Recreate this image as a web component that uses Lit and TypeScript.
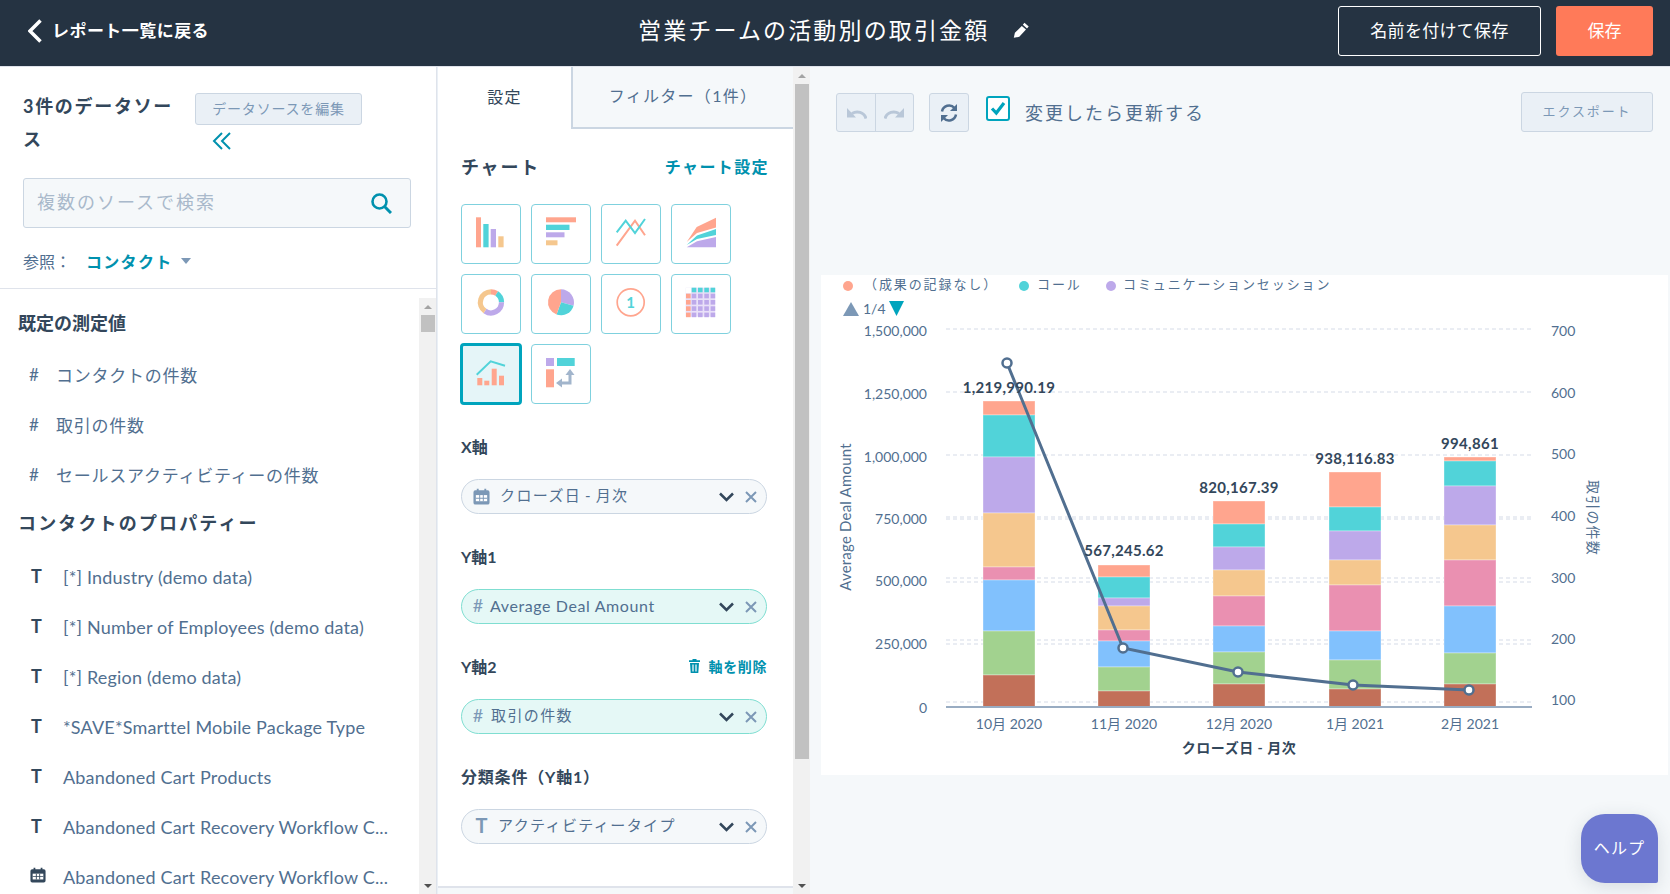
import { LitElement, html, svg, css } from 'lit';
import { customElement } from 'lit/decorators.js';

const COLORS = ['#ffa58e', '#51d3d9', '#bda9ea', '#f5c78e', '#ea90b1', '#81c1fd', '#a2d28f', '#c27059'];

/* segment boundaries of each stacked bar, top to bottom, in page pixels */
const BARS = [
  { x: 983, label: '1,219,990.19', labelY: 387, month: '10月 2020', ys: [401, 415, 457, 513, 567, 580, 631, 675, 707] },
  { x: 1098, label: '567,245.62', labelY: 549.5, month: '11月 2020', ys: [565, 577, 598, 606, 630, 641, 667, 691, 707] },
  { x: 1213, label: '820,167.39', labelY: 486.5, month: '12月 2020', ys: [501, 524, 547, 570, 596, 626, 652, 684, 707] },
  { x: 1329, label: '938,116.83', labelY: 457.5, month: '1月 2021', ys: [472, 507, 531, 560, 585, 631, 660, 689, 707] },
  { x: 1444, label: '994,861', labelY: 442.5, month: '2月 2021', ys: [457, 461, 486, 525, 560, 606, 653, 684, 707] },
];

const LINE = [[1007, 363], [1123, 648], [1238, 672], [1353, 685], [1469, 690]];
const LEFT_TICKS: [string, number][] = [['1,500,000', 330], ['1,250,000', 393], ['1,000,000', 456], ['750,000', 518], ['500,000', 580], ['250,000', 643], ['0', 707]];
const RIGHT_TICKS: [string, number][] = [['700', 330], ['600', 392], ['500', 453], ['400', 515], ['300', 577], ['200', 638], ['100', 699]];
const GRID = [329, 392, 455, 517, 519, 578, 582, 640, 644, 702];

function arc(cx: number, cy: number, r: number, a0: number, a1: number) {
  const p = (a: number) => [cx + r * Math.sin((a * Math.PI) / 180), cy - r * Math.cos((a * Math.PI) / 180)];
  const [x0, y0] = p(a0);
  const [x1, y1] = p(a1);
  return `M${cx} ${cy}L${x0} ${y0}A${r} ${r} 0 ${a1 - a0 > 180 ? 1 : 0} 1 ${x1} ${y1}Z`;
}

const tileIcons = [
  svg`<rect x="15" y="13.3" width="5" height="30" fill="#ffa58e"/><rect x="22.3" y="20" width="5.3" height="23.3" fill="#51d3d9"/><rect x="29.7" y="25" width="5.3" height="18.3" fill="#bda9ea"/><rect x="37.3" y="32.3" width="5.3" height="11" fill="#f5c78e"/>`,
  svg`<rect x="15" y="13.3" width="30" height="5" fill="#ffa58e"/><rect x="15" y="20.7" width="23.5" height="5.3" fill="#51d3d9"/><rect x="15" y="28.3" width="18.5" height="5" fill="#bda9ea"/><rect x="15" y="36.3" width="11.5" height="5" fill="#f5c78e"/>`,
  svg`<polyline points="15.7,41.7 34,16.7 44,31.3" fill="none" stroke="#ffa58e" stroke-width="2"/><polyline points="15.7,28.3 24.7,16.7 34,29 44,15" fill="none" stroke="#51d3d9" stroke-width="2"/>`,
  svg`<polygon points="15.7,38 25.7,23 45,13.7 45,23.5 26,29" fill="#ffa58e"/><polygon points="15.7,41 26,31.5 45,25 45,31 26,35" fill="#51d3d9"/><polygon points="15.7,43.3 26,37.3 45,33 45,43.3" fill="#bda9ea"/>`,
  svg`<g fill="none" stroke-width="5.2"><path d="M30 17.8A10.5 10.5 0 0 1 35.7 19.5" stroke="#ffa58e"/><path d="M35.7 19.5A10.5 10.5 0 0 1 40.5 28.3" stroke="#51d3d9"/><path d="M40.5 28.3A10.5 10.5 0 0 1 24 37" stroke="#bda9ea"/><path d="M24 37A10.5 10.5 0 0 1 30 17.8" stroke="#f5c78e"/></g>`,
  svg`<path d="${arc(30, 28.3, 13, 0, 105)}" fill="#bda9ea"/><path d="${arc(30, 28.3, 13, 105, 200)}" fill="#51d3d9"/><path d="${arc(30, 28.3, 13, 200, 360)}" fill="#ffa58e"/>`,
  svg`<circle cx="29.7" cy="28.3" r="13.5" fill="none" stroke="#ffa58e" stroke-width="1.7"/><text x="29.7" y="33.5" text-anchor="middle" font-size="15" font-weight="700" fill="#51d3d9" font-family="Lato, sans-serif">1</text>`,
  svg`<rect x="14.7" y="13.7" width="29.5" height="29" fill="#e9e1f8"/><rect x="14.7" y="13.7" width="5.5" height="5.5" fill="#fff"/>
    ${[0, 1, 2, 3].map((i) => svg`<rect x="${20.7 + i * 6.3}" y="13.7" width="4.6" height="4.6" fill="#51d3d9"/><rect x="15" y="${19.7 + i * 6.3}" width="4.6" height="4.6" fill="#ffa58e"/>
    ${[0, 1, 2, 3].map((j) => svg`<rect x="${20.7 + i * 6.3}" y="${19.7 + j * 6.3}" width="4.6" height="4.6" fill="#bda9ea"/>`)}`)}`,
  svg`<polyline points="15.7,30.7 29.7,17.3 44,21.7" fill="none" stroke="#51d3d9" stroke-width="2"/><rect x="16.3" y="34" width="5" height="7.3" fill="#ffa58e"/><rect x="23.3" y="36.7" width="5" height="4.6" fill="#ffa58e"/><rect x="30.7" y="24.7" width="5" height="16.6" fill="#ffa58e"/><rect x="38" y="31.7" width="5" height="9.6" fill="#ffa58e"/>`,
  svg`<rect x="15" y="14" width="8" height="8" fill="#bda9ea"/><rect x="26" y="14" width="17.7" height="8" fill="#51d3d9"/><rect x="15" y="25.3" width="8" height="18" fill="#ffa58e"/><path d="M39 30V39H30" fill="none" stroke="#a2b5cc" stroke-width="3"/><polygon points="39,25 43.5,31 34.5,31" fill="#a2b5cc"/><polygon points="25,39 31,34.5 31,43.5" fill="#a2b5cc"/>`,
];

const calendarIcon = (w: number, color: string) => html`<svg width=${w} height=${w} viewBox="0 0 18 18"><path fill=${color} d="M2.500 2.500H4V.8h2v1.700h6V.8h2v1.700h1.500a2 2 0 0 1 2 2v11a2 2 0 0 1-2 2h-13a2 2 0 0 1-2-2v-11a2 2 0 0 1 2-2z"/><path fill="#fff" d="M3 7.500h12v6.500H3z"/><path fill=${color} d="M6.600 7.500h1v6.500h-1zM10.400 7.500h1v6.500h-1zM3 10.300h12v1H3z"/></svg>`;

@customElement('deal-chart')
class DealChart extends LitElement {
  static styles = css`
    :host { display: block; height: 100%; }
    svg { display: block; width: 100%; height: 100%; }
    text { font-family: Lato, "Noto Sans CJK JP", sans-serif; dominant-baseline: central; }
    .tick { font-size: 14px; fill: #516f90; }
    .legend { font-size: 13px; fill: #516f90; letter-spacing: 1.9px; }
    .value { font-size: 15px; font-weight: 700; fill: #33475b; letter-spacing: .3px; }
    .axis { font-size: 14px; font-weight: 700; fill: #33475b; letter-spacing: .5px; }
    .side { font-size: 15px; fill: #516f90; letter-spacing: .2px; }
    .side.ja { font-size: 14px; letter-spacing: 1.2px; }
  `;

  render() {
    const pts = LINE.map((p) => p.join(',')).join(' ');
    return html`<svg viewBox="821 275 847 500">
      <rect x="821" y="275" width="847" height="500" fill="#fff"/>
      <circle cx="848" cy="286" r="5" fill="#ffa58e"/>
      <text class="legend" x="864" y="284">（成果の記録なし）</text>
      <circle cx="1024" cy="286" r="5" fill="#51d3d9"/>
      <text class="legend" x="1037" y="284">コール</text>
      <circle cx="1111" cy="286" r="5" fill="#bda9ea"/>
      <text class="legend" x="1123" y="284">コミュニケーションセッション</text>
      <polygon points="851,302 859,316 843,316" fill="#7c98b6"/>
      <text x="863" y="308" font-size="14" fill="#516f90">1/4</text>
      <polygon points="889,301 904,301 896.500,316" fill="#00a4bd"/>

      ${GRID.map((y) => svg`<line x1="946" x2="1532" y1=${y} y2=${y} stroke="#e3e8f0" stroke-width="1.500" stroke-dasharray="4 3"/>`)}
      ${LEFT_TICKS.map(([t, y]) => svg`<text class="tick" x="927" y=${y} text-anchor="end">${t}</text>`)}
      ${RIGHT_TICKS.map(([t, y]) => svg`<text class="tick" x="1551" y=${y}>${t}</text>`)}

      ${BARS.map((b) => svg`
        ${COLORS.map((c, i) => svg`<rect x=${b.x} y=${b.ys[i]} width="52" height=${b.ys[i + 1] - b.ys[i]} fill=${c} stroke="#fff" stroke-opacity=".35"/>`)}
        <text class="tick" x=${b.x + 26} y="723" text-anchor="middle">${b.month}</text>
      `)}
      <line x1="946" x2="1532" y1="707" y2="707" stroke="#99acc2" stroke-width="2"/>

      <polyline points=${pts} fill="none" stroke="#516f90" stroke-width="3"/>
      ${BARS.map((b) => svg`<text class="value" x=${b.x + 26} y=${b.labelY} text-anchor="middle">${b.label}</text>`)}
      ${LINE.map(([x, y]) => svg`<circle cx=${x} cy=${y} r="4.500" fill="#fff" stroke="#516f90" stroke-width="2.500"/>`)}

      <text class="axis" x="1239" y="747" text-anchor="middle">クローズ日 - 月次</text>
      <text class="side" transform="translate(845 517) rotate(-90)" text-anchor="middle">Average Deal Amount</text>
      <text class="side ja" transform="translate(1593 518) rotate(90)" text-anchor="middle">取引の件数</text>
    </svg>`;
  }
}

@customElement('app-root')
class AppRoot extends LitElement {
  static styles = css`
    :host { display: block; height: 894px; overflow: hidden; position: relative; font-family: Lato, "Noto Sans CJK JP", sans-serif; color: #33475b; background: #f5f8fa; }
    * { box-sizing: border-box; }
    svg { display: block; flex: none; }

    .top { height: 67px; background: #253342; border-bottom: 1px solid #dfe3eb; display: flex; align-items: center; padding: 0 17px 5px 28px; color: #fff; }
    .back { display: flex; align-items: center; gap: 10px; font-size: 17px; font-weight: 700; letter-spacing: .45px; width: 179px; white-space: nowrap; }
    .back span { padding-bottom: 2px; }
    .title { margin-left: 431px; font-size: 23px; letter-spacing: 2.150px; white-space: nowrap; display: flex; align-items: center; gap: 24px; }
    .title span { padding-bottom: 3px; }
    .title svg { margin-bottom: 2px; }
    .spacer { flex: 1; }
    .save-as { width: 203px; height: 50px; border: 1px solid #fff; border-radius: 3px; display: flex; align-items: center; justify-content: center; font-size: 17px; letter-spacing: .3px; padding-bottom: 3px; }
    .save { width: 97px; height: 50px; margin-left: 15px; background: #ff7a59; border-radius: 3px; display: flex; align-items: center; justify-content: center; font-size: 17px; padding-bottom: 3px; }

    .main { display: grid; grid-template-columns: 437px 373px 1fr; height: 827px; }

    .left { border-right: 1px solid #dfe3eb; background: #fff; display: flex; flex-direction: column; min-height: 0; }
    .left-top { height: 222px; flex: none; padding: 26px 24px 0 23px; border-bottom: 1px solid #dfe3eb; }
    .source-row { display: flex; height: 65px; }
    .source-title { width: 160px; margin: -3px 12px 0 0; font-size: 18px; font-weight: 700; line-height: 33px; letter-spacing: 1.700px; }
    .edit-btn { width: 167px; height: 32px; padding-bottom: 3px; background: #eaf0f6; border: 1px solid #cbd6e2; border-radius: 3px; color: #7c98b6; font-size: 14px; letter-spacing: .8px; display: flex; align-items: center; justify-content: center; }
    .collapse { margin: 7px 0 0 17px; }
    .search { margin-top: 20px; width: 388px; height: 50px; background: #f5f8fa; border: 1px solid #cbd6e2; border-radius: 3px; display: flex; align-items: center; justify-content: space-between; padding: 0 18px 0 13px; color: #a9b9cb; font-size: 18px; letter-spacing: 2px; }
    .search span { padding-bottom: 5px; }
    .ref { margin-top: 21px; display: flex; align-items: center; font-size: 16px; color: #516f90; }
    .ref b { margin-left: 15px; color: #0091ae; letter-spacing: 1.300px; }
    .ref i { margin-left: 8px; width: 0; height: 0; border: 5.500px solid transparent; border-top: 6px solid #7c98b6; border-bottom: 0; }

    .list-wrap { flex: 1; display: flex; min-height: 0; }
    .list { flex: 1; overflow: hidden; min-width: 0; padding: 21px 0 0 18px; }
    .list h3 { margin: 0; height: 26px; line-height: 26px; font-size: 18px; font-weight: 700; }
    .list h3.first { margin-bottom: 14px; }
    .list h3.second { margin: 10px 0 17px; letter-spacing: 2.150px; }
    .row { height: 50px; display: flex; align-items: center; color: #516f90; font-size: 18px; letter-spacing: .18px; white-space: nowrap; padding-bottom: 2px; }
    .row .mark { flex: none; width: 45px; padding-left: 11px; font-size: 17px; color: #516f90; }
    .row .mark.t { padding: 0 0 2px 13px; width: 45px; font-weight: 700; font-size: 18px; color: #33475b; }
    .row .mark.cal { padding: 0 0 5px 12px; }
    .row.num { font-size: 17px; letter-spacing: .75px; }
    .row.num .mark { width: 38px; }

    .scroll { width: 17px; flex: none; background: #f1f1f1; display: flex; flex-direction: column; align-items: center; }
    .left .scroll { margin-top: 9px; }
    .arrow { flex: none; height: 17px; display: flex; align-items: center; justify-content: center; }
    .arrow i { width: 0; height: 0; border: 4px solid transparent; border-bottom: 4px solid #a3a3a3; border-top: 0; }
    .arrow.down { margin-top: auto; }
    .arrow.down i { border-bottom: 0; border-top: 4px solid #505050; }
    .thumb { width: 14px; background: #c1c1c1; }

    .mid { display: flex; background: #fff; border-left: 1px solid #eaf0f6; min-height: 0; }
    .mid-main { flex: 1; min-width: 0; display: flex; flex-direction: column; }
    .tabs { height: 62px; display: flex; flex: none; }
    .tab { display: flex; align-items: center; justify-content: center; font-size: 16px; letter-spacing: 1.300px; padding-bottom: 5px; }
    .tab.on { width: 133px; }
    .tab.off { flex: 1; background: #f5f8fa; border-left: 2px solid #cbd6e2; border-bottom: 2px solid #cbd6e2; color: #516f90; }
    .cfg { flex: 1; padding: 25px 26px 0 23px; }
    .cfg-head { display: flex; justify-content: space-between; align-items: center; height: 26px; padding-bottom: 2px; }
    .cfg-head b { font-size: 18px; letter-spacing: 1.800px; }
    .cfg-head a { color: #0091ae; font-size: 16px; font-weight: 700; letter-spacing: 1.400px; margin-right: -2px; }
    .tiles { display: grid; grid-template-columns: repeat(4, 60px); grid-auto-rows: 60px; gap: 10px; margin: 24px 0 32px; }
    .tile { border: 1px solid #7fd1de; border-radius: 4px; background: #fff; }
    .tile.on { background: #e5f5f8; border: 3px solid #00a4bd; margin: -1px; }
    .tile svg { width: 100%; height: 100%; }

    .field-label { display: flex; justify-content: space-between; align-items: center; height: 24px; margin-bottom: 19px; padding-bottom: 5px; font-size: 16px; font-weight: 700; }
    .field-label.wide { letter-spacing: .8px; }
    .remove { display: flex; align-items: center; gap: 9px; color: #0091ae; font-size: 14px; letter-spacing: .6px; }
    .pill { height: 35px; margin-bottom: 32px; border: 1px solid #cbd6e2; border-radius: 18px; background: #f5f8fa; display: flex; align-items: center; padding: 0 9px 0 11px; font-size: 15px; color: #516f90; letter-spacing: 1.400px; white-space: nowrap; }
    .pill.live { background: #e5f8f6; border-color: #7fded1; }
    .pill .kind { flex: none; width: 17px; margin-right: 10px; color: #7c98b6; display: flex; justify-content: center; }
    .pill .hash { width: 10px; margin-right: 8px; font-size: 18px; font-weight: 400; letter-spacing: 0; padding-bottom: 3px; }
    .pill .bigt { font-size: 20px; font-weight: 700; letter-spacing: 0; width: 17px; margin-right: 8px; padding-bottom: 3px; }
    .pill .name { flex: 1; padding-bottom: 5px; word-spacing: -1.500px; }
    .pill .en { font-size: 16px; letter-spacing: .6px; padding-bottom: 2px; word-spacing: 0; margin-left: -1px; }
    .pill .chev { margin-right: 11px; }
    .mid-foot { flex: none; height: 8px; background: #f5f8fa; border-top: 2px solid #dfe3eb; }

    .right { background: #f5f8fa; display: flex; flex-direction: column; min-width: 0; }
    .tools { height: 208px; flex: none; padding: 26px 17px 0 26px; display: flex; align-items: flex-start; }
    .group { display: flex; height: 39px; border: 1px solid #cbd6e2; border-radius: 3px; background: #eaf0f6; }
    .group span { width: 38px; display: flex; align-items: center; justify-content: center; }
    .group span + span { border-left: 1px solid #cbd6e2; }
    .refresh { margin-left: 15px; }
    .check { width: 24px; height: 25px; margin: 3px 0 0 17px; border: 2px solid #00a4bd; border-radius: 3px; background: #fff; display: flex; align-items: center; justify-content: center; }
    .auto { margin: 6px 0 0 15px; font-size: 18px; color: #516f90; letter-spacing: 2px; white-space: nowrap; }
    .export { margin: -1px 0 0 auto; width: 132px; height: 40px; padding-bottom: 4px; border: 1px solid #cbd6e2; border-radius: 3px; background: #eaf0f6; color: #7c98b6; font-size: 13px; letter-spacing: 1.900px; display: flex; align-items: center; justify-content: center; }
    .chart { margin: 0 2px 0 11px; height: 500px; }

    .help { position: absolute; left: 1581px; top: 814px; width: 77px; height: 69px; padding-bottom: 4px; background: #6c77d0; color: #fff; border-radius: 24px 24px 2px 24px; box-shadow: 0 4px 18px rgba(45, 62, 80, .15); display: flex; align-items: center; justify-content: center; font-size: 16px; letter-spacing: 1.200px; }
  `;

  private renderRow(kind: 'num' | 't' | 'cal', name: string) {
    return html`<div class="row ${kind === 'num' ? 'num' : ''}">
      ${kind === 'num' ? html`<span class="mark">#</span>` : kind === 't' ? html`<span class="mark t">T</span>` : html`<span class="mark t cal">${calendarIcon(16, '#33475b')}</span>`}
      <span>${name}</span>
    </div>`;
  }

  private renderPill(kind: 'cal' | 'num' | 't', name: string, live: boolean, en = false) {
    return html`<div class="pill ${live ? 'live' : ''}">
      ${kind === 'cal' ? html`<span class="kind">${calendarIcon(17, '#7c98b6')}</span>` : kind === 'num' ? html`<span class="kind hash">#</span>` : html`<span class="kind bigt">T</span>`}
      <span class="name ${en ? 'en' : ''}">${name}</span>
      <svg class="chev" width="15" height="10" viewBox="0 0 15 10"><polyline points="1,1.500 7.500,8 14,1.500" fill="none" stroke="#33475b" stroke-width="2.500"/></svg>
      <svg width="12" height="12" viewBox="0 0 12 12"><path d="M1 1L11 11M11 1L1 11" stroke="#7c98b6" stroke-width="2"/></svg>
    </div>`;
  }

  render() {
    return html`
      <header class="top">
        <div class="back">
          <svg width="14" height="24" viewBox="0 0 14 24"><polyline points="12.500,1.500 2,12 12.500,22.500" fill="none" stroke="#fff" stroke-width="3.500"/></svg>
          <span>レポート一覧に戻る</span>
        </div>
        <div class="title">
          <span>営業チームの活動別の取引金額</span>
          <svg width="17" height="16" viewBox="0 0 17 16"><path fill="#fff" d="M11.500.8l4.200 3.700-1.700 2-4.200-3.700zM8.800 3.900l4.200 3.700-6.700 7.200-5.500 1 1.100-5z"/></svg>
        </div>
        <div class="spacer"></div>
        <div class="save-as">名前を付けて保存</div>
        <div class="save">保存</div>
      </header>

      <div class="main">
        <section class="left">
          <div class="left-top">
            <div class="source-row">
              <div class="source-title">3件のデータソース</div>
              <div>
                <div class="edit-btn">データソースを編集</div>
                <svg class="collapse" width="20" height="18" viewBox="0 0 20 18"><path d="M10 1L2 9l8 8M18 1l-8 8 8 8" fill="none" stroke="#0091ae" stroke-width="2"/></svg>
              </div>
            </div>
            <div class="search">
              <span>複数のソースで検索</span>
              <svg width="21" height="21" viewBox="0 0 21 21"><circle cx="8.500" cy="8.500" r="7" fill="none" stroke="#0091ae" stroke-width="2.600"/><path d="M13.500 13.500L20 20" stroke="#0091ae" stroke-width="3"/></svg>
            </div>
            <div class="ref"><span>参照：</span><b>コンタクト</b><i></i></div>
          </div>
          <div class="list-wrap">
            <div class="list">
              <h3 class="first">既定の測定値</h3>
              ${this.renderRow('num', 'コンタクトの件数')}
              ${this.renderRow('num', '取引の件数')}
              ${this.renderRow('num', 'セールスアクティビティーの件数')}
              <h3 class="second">コンタクトのプロパティー</h3>
              ${this.renderRow('t', '[*] Industry (demo data)')}
              ${this.renderRow('t', '[*] Number of Employees (demo data)')}
              ${this.renderRow('t', '[*] Region (demo data)')}
              ${this.renderRow('t', '*SAVE*Smarttel Mobile Package Type')}
              ${this.renderRow('t', 'Abandoned Cart Products')}
              ${this.renderRow('t', 'Abandoned Cart Recovery Workflow C...')}
              ${this.renderRow('cal', 'Abandoned Cart Recovery Workflow C...')}
            </div>
            <div class="scroll">
              <div class="arrow"><i></i></div>
              <div class="thumb" style="height: 17px"></div>
              <div class="arrow down"><i></i></div>
            </div>
          </div>
        </section>

        <section class="mid">
          <div class="mid-main">
            <div class="tabs">
              <div class="tab on">設定</div>
              <div class="tab off">フィルター（1件）</div>
            </div>
            <div class="cfg">
              <div class="cfg-head"><b>チャート</b><a>チャート設定</a></div>
              <div class="tiles">
                ${tileIcons.map((icon, i) => html`<div class="tile ${i === 8 ? 'on' : ''}"><svg viewBox=${i === 8 ? '2 2 56 56' : '1 1 58 58'}>${icon}</svg></div>`)}
              </div>
              <div class="field-label">X軸</div>
              ${this.renderPill('cal', 'クローズ日 - 月次', false)}
              <div class="field-label">Y軸1</div>
              ${this.renderPill('num', 'Average Deal Amount', true, true)}
              <div class="field-label">
                <span>Y軸2</span>
                <span class="remove">
                  <svg width="11" height="14" viewBox="0 0 11 14"><path fill="#0091ae" d="M3.500 0h4v1.200H11V3H0V1.200h3.500zM1 4h9l-.7 10H1.700zM3.400 5.500v7h1.200v-7zm3 0v7h1.200v-7z"/></svg>
                  軸を削除
                </span>
              </div>
              ${this.renderPill('num', '取引の件数', true)}
              <div class="field-label wide">分類条件（Y軸1）</div>
              ${this.renderPill('t', 'アクティビティータイプ', false)}
            </div>
            <div class="mid-foot"></div>
          </div>
          <div class="scroll">
            <div class="arrow"><i></i></div>
            <div class="thumb" style="height: 675px"></div>
            <div class="arrow down"><i></i></div>
          </div>
        </section>

        <section class="right">
          <div class="tools">
            <div class="group">
              <span><svg width="21" height="12" viewBox="0 0 21 12"><path d="M20 11.500C18 5 11 3.500 6 6.500" fill="none" stroke="#b9c7d8" stroke-width="3"/><polygon points="1,1 1,10.500 10,10.500" fill="#b9c7d8"/></svg></span>
              <span><svg width="21" height="12" viewBox="0 0 21 12"><path d="M1 11.500C3 5 10 3.500 15 6.500" fill="none" stroke="#b9c7d8" stroke-width="3"/><polygon points="20,1 20,10.500 11,10.500" fill="#b9c7d8"/></svg></span>
            </div>
            <div class="group refresh">
              <span><svg width="20" height="20" viewBox="0 0 20 20"><path d="M3 8.500A7.200 7.200 0 0 1 15.500 5M17 11.500A7.200 7.200 0 0 1 4.500 15" fill="none" stroke="#516f90" stroke-width="2.500"/><polygon points="18,1 18,8 11,8" fill="#516f90"/><polygon points="2,19 2,12 9,12" fill="#516f90"/></svg></span>
            </div>
            <div class="check"><svg width="16" height="15" viewBox="0 0 16 15"><polyline points="2,7.500 6.300,12 14,2" fill="none" stroke="#00a4bd" stroke-width="3.200"/></svg></div>
            <div class="auto">変更したら更新する</div>
            <div class="export">エクスポート</div>
          </div>
          <div class="chart"><deal-chart></deal-chart></div>
        </section>
      </div>

      <div class="help">ヘルプ</div>
    `;
  }
}
